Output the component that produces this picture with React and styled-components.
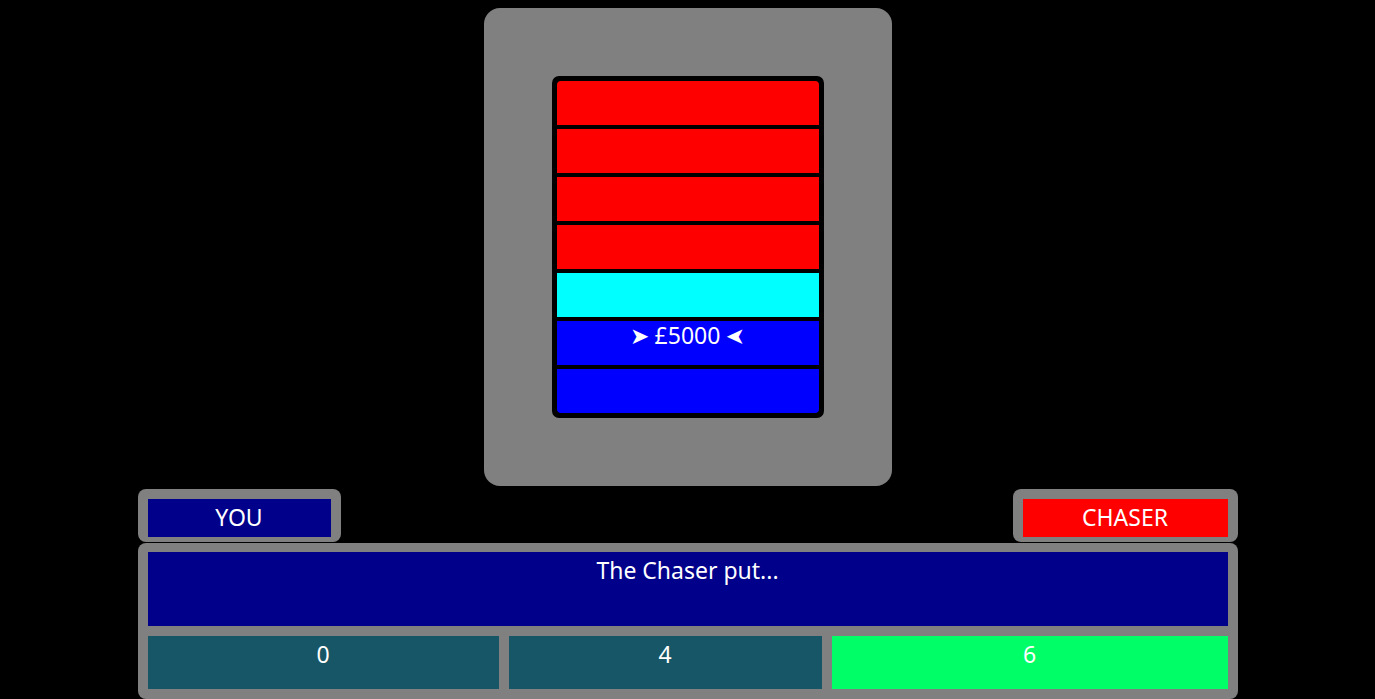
import React from 'react';
import styled, { createGlobalStyle } from 'styled-components';

const GlobalStyle = createGlobalStyle`
  html, body {
    background: #000;
  }
  body {
    margin: 8px;
    font-family: "Noto Sans", "Liberation Sans", sans-serif;
    color: #fff;
  }
`;

const Page = styled.main`
  display: flex;
  flex-direction: column;
  align-items: center;
`;

const Board = styled.div`
  width: 408px;
  height: 478px;
  box-sizing: border-box;
  padding: 68px;
  background: #808080;
  border-radius: 16px;
`;

const Ladder = styled.div`
  display: flex;
  flex-direction: column;
  gap: 4px;
  background: #000;
  border: 5px solid #000;
  border-radius: 7px;
  overflow: hidden;
`;

const Rung = styled.div`
  height: 44px;
  background: ${(p) => p.$color};
  font-size: 23px;
  line-height: 29px;
  text-align: center;
  &:first-child {
    border-radius: 4px 4px 0 0;
  }
  &:last-child {
    border-radius: 0 0 4px 4px;
  }
`;

const Flip = styled.span`
  display: inline-block;
  transform: scaleX(-1);
`;

const Bottom = styled.section`
  width: 1100px;
  margin-top: 3px;
  display: flex;
  flex-direction: column;
`;

const Names = styled.div`
  display: flex;
  justify-content: space-between;
`;

const NameTag = styled.div`
  width: ${(p) => p.$width}px;
  box-sizing: border-box;
  padding: 10px 10px 5px;
  background: #808080;
  border-radius: 8px;
`;

const NameLabel = styled.div`
  height: 38px;
  background: ${(p) => p.$color};
  font-size: 23px;
  line-height: 37px;
  text-align: center;
`;

const Panel = styled.div`
  margin-top: 1px;
  background: #808080;
  border-radius: 8px;
  padding: 9px 10px 10px;
  display: flex;
  flex-direction: column;
  gap: 10px;
`;

const Message = styled.div`
  height: 74px;
  background: #00008b;
  font-size: 23px;
  line-height: 36px;
  text-align: center;
`;

const Options = styled.div`
  display: grid;
  grid-template-columns: 351fr 313fr 396fr;
  gap: 10px;
`;

const Option = styled.div`
  height: 53px;
  background: ${(p) => (p.$picked ? '#00ff66' : '#175666')};
  font-size: 23px;
  line-height: 36px;
  text-align: center;
`;

const rungs = ['#ff0000', '#ff0000', '#ff0000', '#ff0000', '#00ffff', '#0000ff', '#0000ff'];

export default function App() {
  return (
    <Page>
      <GlobalStyle />
      <Board>
        <Ladder>
          {rungs.map((c, i) => (
            <Rung key={i} $color={c}>
              {i === 5 && (
                <>
                  ➤ £5000 <Flip>➤</Flip>
                </>
              )}
            </Rung>
          ))}
        </Ladder>
      </Board>
      <Bottom>
        <Names>
          <NameTag $width={203}>
            <NameLabel $color="#00008b">YOU</NameLabel>
          </NameTag>
          <NameTag $width={225}>
            <NameLabel $color="#ff0000">CHASER</NameLabel>
          </NameTag>
        </Names>
        <Panel>
          <Message>The Chaser put...</Message>
          <Options>
            <Option>0</Option>
            <Option>4</Option>
            <Option $picked>6</Option>
          </Options>
        </Panel>
      </Bottom>
    </Page>
  );
}
